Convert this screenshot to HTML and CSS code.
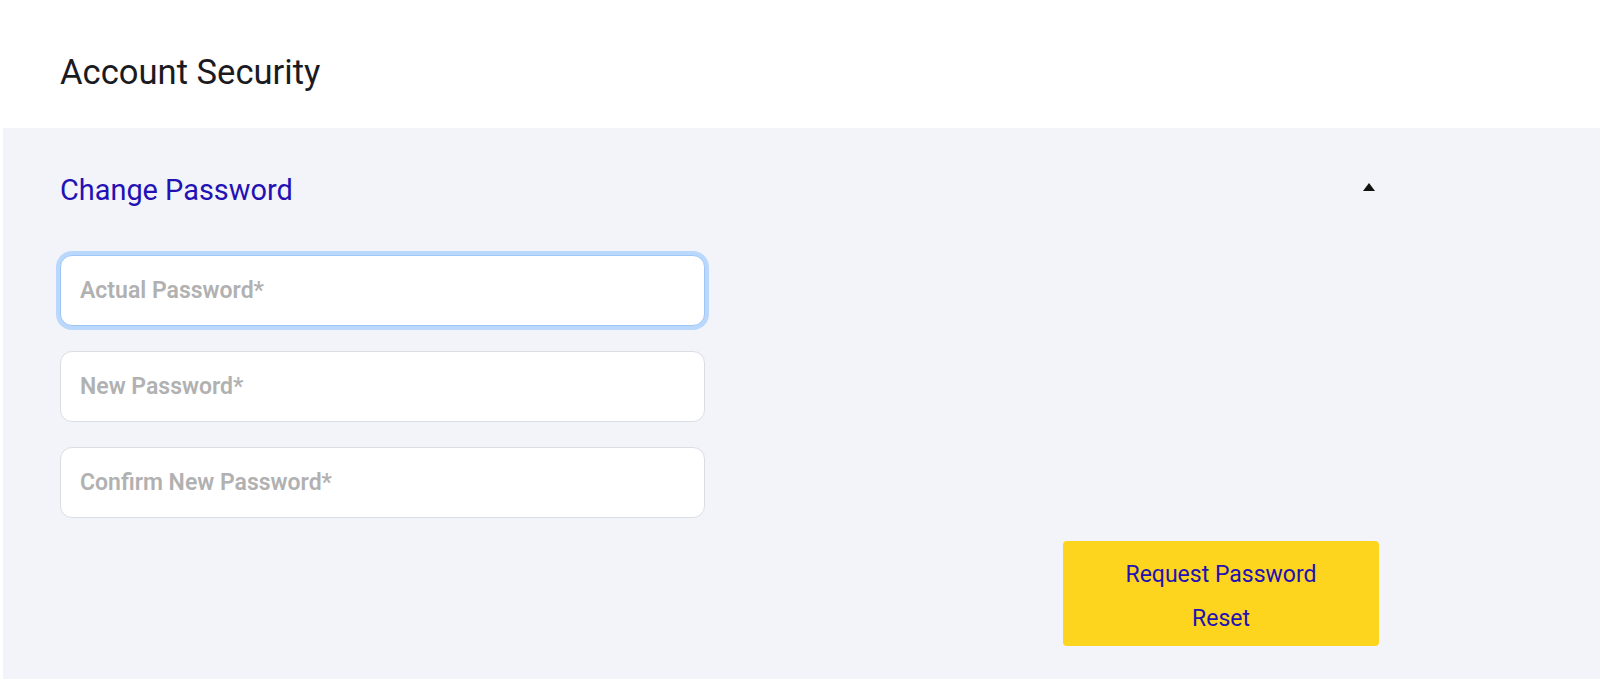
FILE: index.html
```html
<!DOCTYPE html>
<html lang="en">
<head>
<meta charset="utf-8">
<title>Account Security</title>
<link rel="stylesheet" href="styles.css">
</head>
<body>
  <header class="page-header">
    <h1 class="page-title">Account Security</h1>
  </header>
  <main class="panel">
    <div class="panel-inner">
      <div class="section-head">
        <h2 class="section-title">Change Password</h2>
        <span class="caret" aria-hidden="true"></span>
      </div>
      <form class="pw-form">
        <div class="fields">
          <input class="field is-focused" type="password" placeholder="Actual Password*">
          <input class="field" type="password" placeholder="New Password*">
          <input class="field" type="password" placeholder="Confirm New Password*">
        </div>
        <div class="actions">
          <button type="button" class="reset-btn">Request Password Reset</button>
        </div>
      </form>
    </div>
  </main>
</body>
</html>
```

FILE: styles.css
```css
* { box-sizing: border-box; }

html, body {
  margin: 0;
  padding: 0;
  background: #ffffff;
  font-family: Roboto, "Liberation Sans", Arial, sans-serif;
}

body {
  height: 679px;
  display: flex;
  flex-direction: column;
  overflow: hidden;
}

.page-header {
  height: 128px;
  padding: 52px 0 0 60px;
}

.page-title {
  margin: 0;
  font-size: 34.6px;
  line-height: 40px;
  font-weight: 400;
  color: #1b1b1f;
}

.panel {
  flex: 1;
  margin-left: 3px;
  background: #f3f4f9;
  padding: 45px 0 0 57px;
}

.panel-inner {
  width: 1319px;
}

.section-head {
  display: flex;
  align-items: center;
  justify-content: space-between;
  height: 34px;
}

.section-title {
  margin: 0;
  font-size: 28.9px;
  line-height: 34px;
  font-weight: 400;
  color: #2311b4;
}

.caret {
  width: 0;
  height: 0;
  border-left: 6px solid transparent;
  border-right: 6px solid transparent;
  border-bottom: 8px solid #111111;
  margin: 0 4px 7px 0;
}

.pw-form {
  margin-top: 48px;
}

.fields {
  display: flex;
  flex-direction: column;
  gap: 25px;
  width: 645px;
}

.field {
  height: 71px;
  width: 100%;
  border: 1px solid #dcdde4;
  border-radius: 12px;
  background: #ffffff;
  padding: 0 19px;
  font-family: Roboto, "Liberation Sans", Arial, sans-serif;
  font-size: 23px;
  font-weight: 600;
  color: #333;
  outline: none;
}

.field::placeholder {
  color: #b1b1b1;
  opacity: 1;
}

.field.is-focused {
  border-color: #9fc6f8;
  box-shadow: 0 0 0 4px #b9d8fc;
}

.actions {
  display: flex;
  justify-content: flex-end;
  margin-top: 23px;
}

.reset-btn {
  width: 316px;
  height: 105px;
  padding: 12px 50px 6px;
  border: none;
  border-radius: 4px;
  background: #fdd51f;
  color: #2311b4;
  font-family: Roboto, "Liberation Sans", Arial, sans-serif;
  font-size: 23px;
  line-height: 43.6px;
  font-weight: 400;
  text-align: center;
  cursor: pointer;
}
```
